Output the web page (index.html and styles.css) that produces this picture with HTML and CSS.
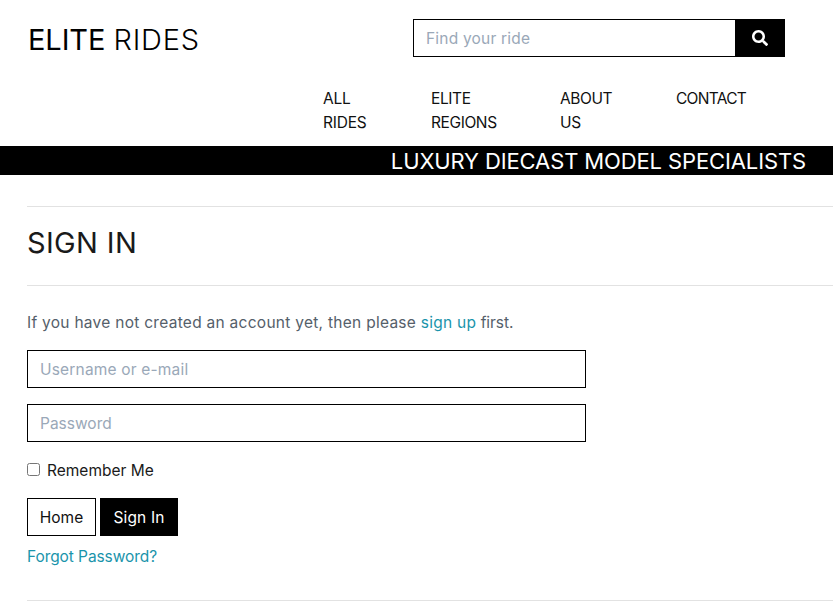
FILE: index.html
```html
<!DOCTYPE html>
<html lang="en">
<head>
<meta charset="utf-8">
<title>Elite Rides</title>
<link rel="stylesheet" href="styles.css">
</head>
<body>
<header class="header">
  <div class="top">
    <a class="brand" href="#"><span class="brand-strong">ELITE</span> <span class="brand-light">RIDES</span></a>
    <form class="search">
      <input class="field search-field" type="text" placeholder="Find your ride">
      <button class="search-button" type="button" aria-label="Search">
        <svg class="search-icon" viewBox="0 0 512 512"><path fill="currentColor" d="M505 442.700 405.300 343c-4.500-4.500-10.600-7-17-7H372c27.600-35.300 44-79.700 44-128C416 93.100 322.900 0 208 0S0 93.100 0 208s93.100 208 208 208c48.300 0 92.700-16.400 128-44v16.300c0 6.400 2.500 12.500 7 17l99.700 99.700c9.400 9.400 24.600 9.400 33.900 0l28.300-28.300c9.400-9.400 9.400-24.600.1-34zM208 336c-70.700 0-128-57.200-128-128 0-70.700 57.200-128 128-128 70.700 0 128 57.200 128 128 0 70.700-57.200 128-128 128z"/></svg>
      </button>
    </form>
  </div>
  <nav class="nav">
    <a class="nav-link rides" href="#">ALL<br>RIDES</a>
    <a class="nav-link regions" href="#">ELITE<br>REGIONS</a>
    <a class="nav-link about" href="#">ABOUT<br>US</a>
    <a class="nav-link contact" href="#">CONTACT</a>
  </nav>
</header>
<div class="banner">LUXURY DIECAST MODEL SPECIALISTS</div>
<main class="main">
  <hr class="rule">
  <h1 class="title">SIGN IN</h1>
  <hr class="rule">
  <p class="intro">If you have not created an account yet, then please <a class="link" href="#">sign up</a><span class="intro-end"> first.</span></p>
  <form class="form">
    <input class="field username" type="text" placeholder="Username or e-mail">
    <input class="field" type="password" placeholder="Password">
    <label class="remember"><input class="check" type="checkbox"><span class="remember-text">Remember Me</span></label>
    <div class="actions">
      <a class="button home" href="#">Home</a>
      <button class="button signin" type="button">Sign In</button>
    </div>
    <a class="link forgot" href="#">Forgot Password?</a>
  </form>
  <hr class="rule">
</main>
</body>
</html>
```
FILE: styles.css
```css
* { box-sizing: border-box; }
body {
  margin: 0;
  overflow: hidden;
  background: #fff;
  color: #1a1a1a;
  font: 15.5px/24px Inter, sans-serif;
}
a { color: inherit; text-decoration: none; }
input, button { font: inherit; }
.header { height: 146px; }
.top {
  display: flex;
  justify-content: space-between;
  padding: 19px 48px 0 28px;
}
.brand { font-size: 29px; line-height: 41px; color: #000; }
.brand-strong { letter-spacing: -0.1px; }
.brand-light { font-weight: 300; letter-spacing: 0.8px; }
.search { display: flex; width: 372px; height: 38px; }
.field {
  display: block;
  width: 100%;
  height: 38px;
  margin: 0;
  padding: 6px 12px;
  border: 1px solid #000;
  border-radius: 0;
  background: #fff;
}
.field::placeholder { color: #9aa8b8; opacity: 1; }
.search-field {
  flex: 1;
  width: auto;
  min-width: 0;
  border-right: 0;
  letter-spacing: 0.2px;
}
.username { letter-spacing: 0.18px; }
.search-button {
  display: grid;
  place-items: center;
  width: 50px;
  padding: 0;
  border: 0;
  background: #000;
  color: #fff;
}
.search-icon { width: 16px; height: 16px; }
.nav {
  display: flex;
  padding: 27px 0 0 323px;
  color: #111;
  letter-spacing: -0.4px;
}
.nav-link { flex: none; }
.rides { width: 108px; letter-spacing: -0.2px; }
.regions { width: 129px; }
.about { width: 116px; }
.contact { letter-spacing: -0.7px; }
.banner {
  height: 29px;
  padding-right: 27px;
  background: #000;
  color: #fff;
  font-size: 22px;
  line-height: 30px;
  letter-spacing: -0.12px;
  text-align: right;
}
.main { padding: 31px 0 0 27px; }
.rule { height: 1px; margin: 0; border: 0; background: #e2e2e2; }
.title {
  margin: 0;
  height: 78px;
  color: #1a1a1a;
  font-size: 29px;
  font-weight: 400;
  line-height: 72px;
  letter-spacing: 0.35px;
}
.intro { margin: 25px 0 15px; color: #55606a; letter-spacing: 0.275px; }
.intro-end { letter-spacing: -0.05px; }
.link { color: #1a94ab; }
.form { display: flex; flex-direction: column; gap: 16px; width: 559px; }
.remember { display: flex; align-items: flex-start; height: 24px; }
.check { width: 13px; height: 13px; margin: 5px 7px 0 0; }
.remember-text { padding-top: 1px; }
.actions { display: flex; gap: 4px; }
.button {
  height: 38px;
  padding: 7px 0 5px;
  border: 1px solid #000;
  text-align: center;
}
.home { width: 69px; color: #111; }
.signin { width: 78px; background: #000; color: #fff; letter-spacing: 0.15px; }
.forgot { margin: -7px 0 31px; letter-spacing: -0.08px; }
```
